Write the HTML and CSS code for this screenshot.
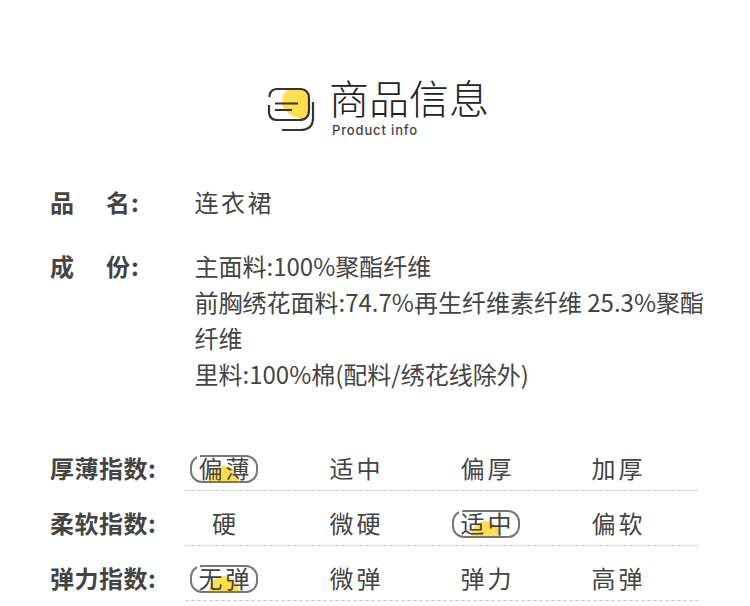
FILE: index.html
```html
<!DOCTYPE html>
<html lang="zh-CN">
<head>
<meta charset="utf-8">
<title>商品信息</title>
<link rel="stylesheet" href="styles.css">
</head>
<body>
<header class="head">
  <svg class="logo" width="50" height="48" viewBox="0 0 50 48" aria-hidden="true">
    <path d="M24 3H36Q43 4 43 12V22Q43 29 38 32.500C27 32 16 26 16 15C16 9 20 4 24 3Z" fill="#ffdf4d"/>
    <path d="M3.500 11V10Q4 4 10 3H35Q43 4 43 12V24Q43 34 33 34H11Q4 34 3 27V19" fill="none" stroke="#333" stroke-width="2.200"/>
    <path d="M47 16V32Q47 44 34 44H16" fill="none" stroke="#333" stroke-width="2.200"/>
    <path d="M9 17.500H32M9 24H26" fill="none" stroke="#333" stroke-width="2"/>
  </svg>
  <div class="head-text">
    <h1 class="title">商品信息</h1>
    <p class="sub">Product info</p>
  </div>
</header>
<section class="facts">
  <div class="fact">
    <div class="fact-label"><span>品</span><span>名:</span></div>
    <div class="fact-value spaced">连衣裙</div>
  </div>
  <div class="fact fact-second">
    <div class="fact-label"><span>成</span><span>份:</span></div>
    <div class="fact-value">主面料:100%聚酯纤维<br>前胸绣花面料:74.7%再生纤维素纤维 25.3%聚酯<br>纤维<br>里料:100%棉(配料/绣花线除外)</div>
  </div>
</section>
<section class="scales">
  <div class="scale">
    <div class="scale-label">厚薄指数:</div>
    <div class="opts">
      <div class="opt"><span class="pill">偏薄</span></div>
      <div class="opt">适中</div>
      <div class="opt">偏厚</div>
      <div class="opt">加厚</div>
    </div>
  </div>
  <div class="scale">
    <div class="scale-label">柔软指数:</div>
    <div class="opts">
      <div class="opt">硬</div>
      <div class="opt">微硬</div>
      <div class="opt"><span class="pill">适中</span></div>
      <div class="opt">偏软</div>
    </div>
  </div>
  <div class="scale">
    <div class="scale-label">弹力指数:</div>
    <div class="opts">
      <div class="opt"><span class="pill">无弹</span></div>
      <div class="opt">微弹</div>
      <div class="opt">弹力</div>
      <div class="opt">高弹</div>
    </div>
  </div>
</section>
</body>
</html>
```
FILE: styles.css
```css
* { box-sizing: border-box; }
html, body { margin: 0; padding: 0; }
body {
  width: 750px;
  height: 606px;
  overflow: hidden;
  background: #fff;
  color: #444;
  font-family: "Noto Sans CJK SC", "Noto Sans", sans-serif;
}
.head {
  display: flex;
  align-items: flex-start;
  padding: 72px 0 0 266px;
  height: 184px;
  gap: 13px;
}
.logo { margin-top: 14px; flex: none; }
.title {
  margin: 0;
  font-size: 40px;
  font-weight: 300;
  line-height: 50px;
  color: #222;
}
.sub {
  margin: 0 0 0 3px;
  font-family: "Inter", sans-serif;
  font-size: 13px;
  font-weight: 500;
  letter-spacing: 0.85px;
  line-height: 16px;
  color: #444;
}
.facts { padding: 0 0 0 50px; }
.fact { display: flex; }
.fact-second { margin-top: 28px; }
.fact-label {
  width: 144.500px;
  flex: none;
  display: flex;
  font-size: 24px;
  font-weight: 700;
  letter-spacing: 1px;
  line-height: 36px;
}
.fact-label span:first-child { width: 56px; }
.fact-value {
  width: 530px;
  font-size: 24px;
  line-height: 36px;
}
.spaced { letter-spacing: 2.500px; }
.scales { padding: 44px 52px 0 50px; }
.scale {
  display: flex;
  height: 55px;
  font-size: 24px;
}
.scale-label {
  width: 135px;
  flex: none;
  padding-top: 18px;
  line-height: 28px;
  font-weight: 700;
  letter-spacing: 0.500px;
}
.opts {
  flex: 1;
  display: flex;
  gap: 53px;
  background: repeating-linear-gradient(to right, #ccc 0 4px, transparent 4px 6px) left bottom / 100% 1px no-repeat;
}
.opt {
  width: 78px;
  flex: none;
  padding: 18px 0 0 3px;
  text-align: center;
  letter-spacing: 3px;
  line-height: 28px;
}
.pill {
  display: block;
  position: relative;
  width: 68px;
  height: 28px;
  margin: 1px 0 0 2px;
  padding-left: 3px;
  line-height: 22px;
  border: 2px solid #777;
  border-radius: 12px;
  background: radial-gradient(circle at 50% 100%, #ffdf4d 0 14.500px, transparent 15px);
}
.pill::before {
  content: "";
  position: absolute;
  left: 5px;
  top: -3px;
  width: 3px;
  height: 5px;
  background: #fff;
}
```
